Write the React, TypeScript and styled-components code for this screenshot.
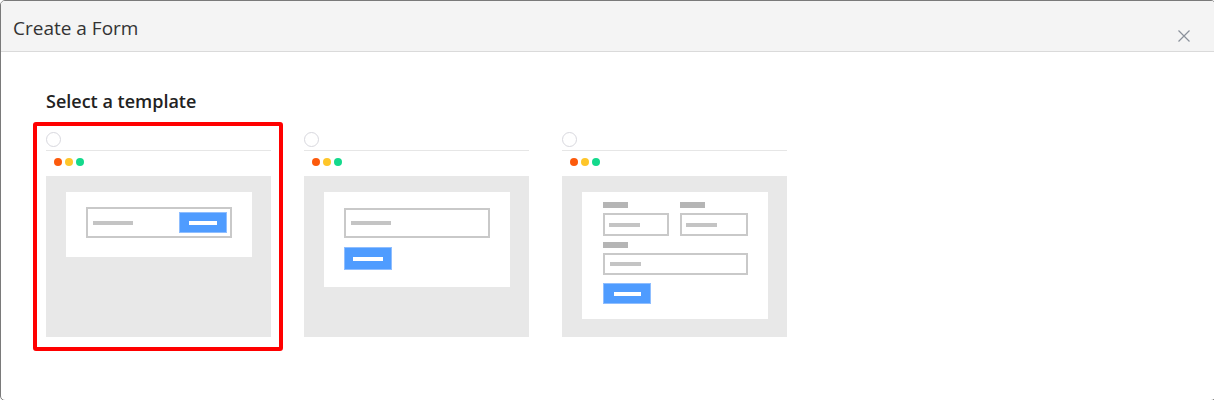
import React from 'react'
import styled, { createGlobalStyle } from 'styled-components'

const GlobalStyle = createGlobalStyle`
  html, body {
    margin: 0;
    padding: 0;
    background: #ffffff;
    overflow: hidden;
  }
  body {
    font-family: "Open Sans", "Noto Sans", Arial, sans-serif;
    color: #333333;
  }
`

const Modal = styled.div`
  box-sizing: border-box;
  width: 1216px;
  height: 401px;
  border: 1px solid #7a7a7a;
  border-radius: 5px;
  overflow: hidden;
  background: #ffffff;
`

const Header = styled.div`
  display: flex;
  justify-content: space-between;
  align-items: flex-start;
  height: 50px;
  padding: 0 25px 0 12px;
  background: #f4f4f4;
  border-bottom: 1px solid #dadada;
`

const Title = styled.h1`
  margin: 0;
  padding-top: 14px;
  font-size: 19px;
  line-height: 26px;
  font-weight: 400;
  color: #333333;
`

const CloseButton = styled.button`
  margin-top: 29px;
  padding: 0;
  width: 12px;
  height: 12px;
  border: none;
  background: none;
  display: flex;
  cursor: pointer;
`

const Body = styled.div`
  padding: 37px 32px 0;
`

const Heading = styled.h2`
  margin: 0 0 9px 13px;
  font-size: 18px;
  line-height: 24px;
  font-weight: 600;
  color: #222222;
`

const TemplateRow = styled.div`
  display: flex;
  gap: 8px;
`

const TemplateCard = styled.div<{ selected: boolean }>`
  box-sizing: border-box;
  width: 250px;
  padding: 6px 8px 10px 9px;
  border: 4px solid ${({ selected }) => (selected ? '#ff0000' : 'transparent')};
  border-radius: 3px;
  cursor: pointer;
`

const Radio = styled.span`
  display: block;
  box-sizing: border-box;
  width: 15px;
  height: 15px;
  border: 1px solid #d8d8de;
  border-radius: 50%;
  margin-bottom: 3px;
`

const Divider = styled.div`
  height: 1px;
  background: #e6e6e6;
`

const WindowDots = styled.div`
  display: flex;
  gap: 3px;
  padding: 7px 0 10px 8px;
`

const Dot = styled.span<{ color: string }>`
  width: 8px;
  height: 8px;
  border-radius: 50%;
  background: ${({ color }) => color};
`

const Preview = styled.div`
  height: 161px;
  box-sizing: border-box;
  padding: 16px 19px 0 20px;
  background: #e8e8e8;
`

const Panel = styled.div<{ pad: string }>`
  background: #ffffff;
  padding: ${({ pad }) => pad};
  display: flex;
  flex-direction: column;
  align-items: flex-start;
`

const FieldBox = styled.div<{ w: number; h: number; padLeft?: number }>`
  box-sizing: border-box;
  width: ${({ w }) => w}px;
  height: ${({ h }) => h}px;
  border: 2px solid #c9c9c9;
  padding: 0 3px 0 ${({ padLeft }) => padLeft ?? 5}px;
  display: flex;
  align-items: center;
  justify-content: space-between;
`

const Placeholder = styled.span<{ w: number }>`
  width: ${({ w }) => w}px;
  height: 4px;
  background: #c4c4c4;
`

const Label = styled.span`
  width: 25px;
  height: 6px;
  background: #b5b5b5;
`

const SubmitButton = styled.span<{ h: number; line: number }>`
  box-sizing: border-box;
  width: 48px;
  height: ${({ h }) => h}px;
  background: #4f9cff;
  border: 1px solid #8fbeff;
  display: flex;
  align-items: center;
  justify-content: center;

  &::after {
    content: '';
    width: ${({ line }) => line}px;
    height: 4px;
    background: #ffffff;
  }
`

const FieldRow = styled.div`
  display: flex;
  gap: 11px;
`

const FieldGroup = styled.div<{ gapBelow: number }>`
  display: flex;
  flex-direction: column;
  gap: 5px;
  margin-bottom: ${({ gapBelow }) => gapBelow}px;
`

const dotColors = ['#fc5a0c', '#fec62a', '#14d98c']

function InlinePreview() {
  return (
    <Panel pad="15px 20px 19px">
      <FieldBox w={146} h={31}>
        <Placeholder w={40} />
        <SubmitButton h={21} line={28} />
      </FieldBox>
    </Panel>
  )
}

function StackedPreview() {
  return (
    <Panel pad="16px 20px 17px">
      <FieldBox w={146} h={30} style={{ marginBottom: 9 }}>
        <Placeholder w={40} />
      </FieldBox>
      <SubmitButton h={23} line={30} />
    </Panel>
  )
}

function GridPreview() {
  return (
    <Panel pad="10px 20px 15px 21px">
      <FieldRow>
        <FieldGroup gapBelow={6}>
          <Label />
          <FieldBox w={66} h={23} padLeft={4}>
            <Placeholder w={31} />
          </FieldBox>
        </FieldGroup>
        <FieldGroup gapBelow={6}>
          <Label />
          <FieldBox w={68} h={23} padLeft={4}>
            <Placeholder w={31} />
          </FieldBox>
        </FieldGroup>
      </FieldRow>
      <FieldGroup gapBelow={8}>
        <Label />
        <FieldBox w={145} h={22} padLeft={5}>
          <Placeholder w={31} />
        </FieldBox>
      </FieldGroup>
      <SubmitButton h={21} line={27} />
    </Panel>
  )
}

const templates = [
  { id: 'inline', Preview: InlinePreview },
  { id: 'stacked', Preview: StackedPreview },
  { id: 'grid', Preview: GridPreview },
]

export default function App() {
  const selected = 'inline'
  return (
    <>
      <GlobalStyle />
      <Modal>
        <Header>
          <Title>Create a Form</Title>
          <CloseButton aria-label="Close">
            <svg width="12" height="12" viewBox="0 0 12 12">
              <path d="M0.5 0.5 L11.5 11.5 M11.5 0.5 L0.5 11.5" stroke="#8a909a" strokeWidth="1.2" fill="none" />
            </svg>
          </CloseButton>
        </Header>
        <Body>
          <Heading>Select a template</Heading>
          <TemplateRow>
            {templates.map(({ id, Preview: Content }) => (
              <TemplateCard key={id} selected={id === selected}>
                <Radio />
                <Divider />
                <WindowDots>
                  {dotColors.map((c) => (
                    <Dot key={c} color={c} />
                  ))}
                </WindowDots>
                <Preview>
                  <Content />
                </Preview>
              </TemplateCard>
            ))}
          </TemplateRow>
        </Body>
      </Modal>
    </>
  )
}
